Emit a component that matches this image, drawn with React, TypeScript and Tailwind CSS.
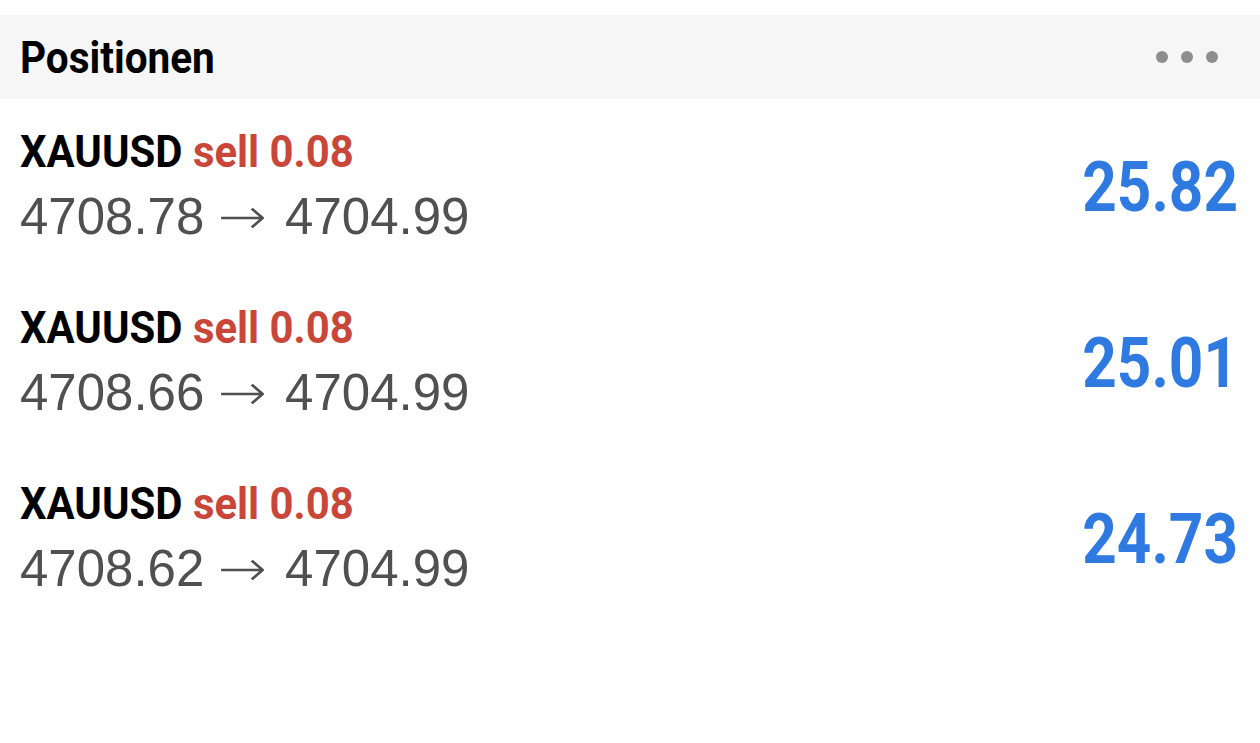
const rows = [
  { sym: 'XAUUSD', side: 'sell 0.08', open: '4708.78', cur: '4704.99', profit: '25.82' },
  { sym: 'XAUUSD', side: 'sell 0.08', open: '4708.66', cur: '4704.99', profit: '25.01' },
  { sym: 'XAUUSD', side: 'sell 0.08', open: '4708.62', cur: '4704.99', profit: '24.73' },
];

const narrow = "font-['Roboto',sans-serif] font-bold inline-block origin-left whitespace-nowrap";

export default function App() {
  return (
    <div className="w-[1260px] h-[743px] bg-white pt-[15px] overflow-hidden">
      <div className="h-[84px] bg-[#f6f6f6] flex items-center justify-between pl-[20px] pr-[42px]">
        <span className={`${narrow} scale-x-[0.9] text-[45px] text-black leading-none`}>Positionen</span>
        <div className="flex gap-[13px]">
          <span className="w-[12px] h-[12px] rounded-full bg-[#8e8e8e]" />
          <span className="w-[12px] h-[12px] rounded-full bg-[#8e8e8e]" />
          <span className="w-[12px] h-[12px] rounded-full bg-[#8e8e8e]" />
        </div>
      </div>
      <div className="flex flex-col">
        {rows.map((r, i) => (
          <div key={i} className="h-[176px] flex items-center justify-between pl-[20px] pr-[22px]">
            <div className="flex flex-col items-start">
              <div className={`${narrow} scale-x-[0.93] text-[45px] leading-[60px]`}>
                <span className="text-black">{r.sym}</span>{' '}
                <span className="text-[#c9473a]">{r.side}</span>
              </div>
              <div className="font-['Liberation_Sans',sans-serif] text-[51px] leading-[70px] text-[#505050] whitespace-nowrap">
                {r.open}
                <span className="inline-block ml-[17px] mr-[21px] font-['DejaVu_Sans',sans-serif] font-extralight scale-x-[1.15]">→</span>
                {r.cur}
              </div>
            </div>
            <div className="font-['Roboto',sans-serif] font-bold text-[70px] text-[#2f7ae0] leading-none scale-x-[0.86] origin-right">
              {r.profit}
            </div>
          </div>
        ))}
      </div>
    </div>
  );
}
